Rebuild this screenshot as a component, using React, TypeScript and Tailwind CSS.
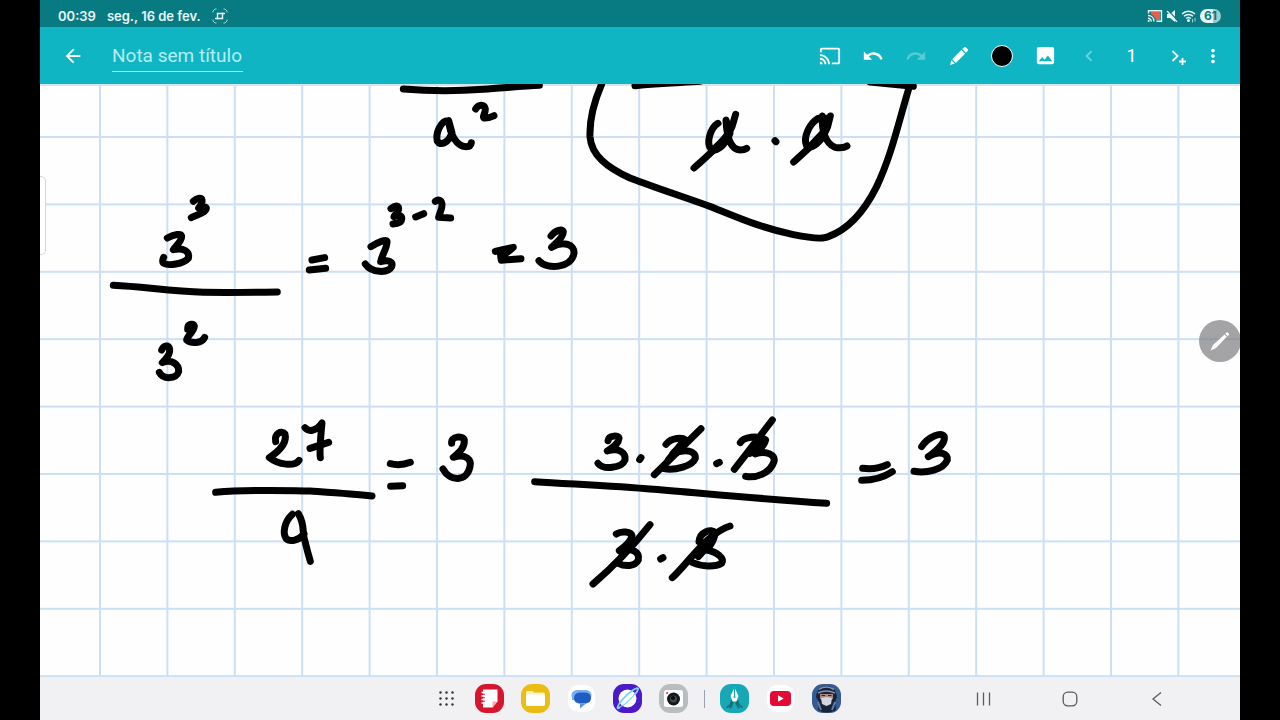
import type { ReactNode } from 'react';
import { MdArrowBack, MdCast, MdChevronLeft, MdImage, MdMoreVert, MdRedo, MdUndo } from 'react-icons/md';

// Each group holds the pen strokes of one part of the note, in triple-size units
const inkGroups = [
  {
    id: 'a-squared',
    transform: 'translate(390 80) scale(0.3333)',
    strokes: [
      'M40 27C120 34 200 34 280 28C340 24 400 18 448 16',
      'M174 122C152 122 136 160 142 184C150 198 176 190 186 158L176 122C180 165 200 198 228 200C238 200 243 195 244 188',
      'M257 87C265 72 284 72 286 86C287 100 276 110 282 114C294 116 305 110 312 107',
    ],
  },
  {
    id: 'a-times-a',
    transform: 'translate(580 80) scale(0.3333)',
    strokes: [
      'M65 12C40 70 28 120 30 170C34 225 80 262 150 294C230 325 310 350 400 383C480 415 540 442 640 464C700 476 730 478 745 470C800 450 850 400 890 320C935 225 955 130 988 20',
      'M165 17C240 10 300 8 360 4',
      'M870 6L1000 19',
      'M414 130C390 145 378 190 393 207C405 218 432 202 450 160L438 120C440 165 450 208 480 210C490 210 496 208 500 205',
      'M342 264C390 220 440 180 456 140L467 103',
      'M405 205L440 170',
      'M585 182L588 185',
      'M715 115C690 130 668 170 680 198C695 210 725 185 738 150L727 108C725 150 735 190 765 202C785 206 795 202 801 198',
      'M641 246C690 200 735 165 743 140L751 108',
      'M695 195L732 155L740 115',
    ],
  },
  {
    id: 'three-cubed',
    transform: 'translate(100 180) scale(0.3333)',
    strokes: [
      'M280 64C292 52 306 52 306 60C308 72 300 78 296 84C320 74 325 85 312 95C295 105 280 110 274 113',
      'M202 174C225 162 243 160 245 168C246 185 225 200 220 209C252 202 270 215 265 235C250 253 205 258 191 250C186 245 188 238 191 232',
      'M40 316C130 320 210 334 310 337C400 338 470 337 532 336',
      'M636 240L674 233',
      'M628 270L677 265',
      'M263 448C262 432 280 428 283 438C283 455 260 468 260 480C275 492 305 490 314 472',
      'M270 442L272 450',
      'M185 510C192 495 206 495 209 507C212 525 195 540 187 548C215 535 238 555 236 575C230 597 190 600 178 577',
    ],
  },
  {
    id: 'three-minus-two',
    transform: 'translate(340 180) scale(0.3333)',
    strokes: [
      'M153 86C165 75 178 75 176 88C174 98 164 104 162 110C184 102 188 110 184 122C178 132 165 131 159 132',
      'M227 111L251 101',
      'M286 64C295 56 306 60 306 76C306 90 298 100 296 112L332 114',
      'M93 200C115 185 138 178 141 184C143 202 125 225 122 245C145 238 160 245 155 260C145 280 95 280 76 252',
      'M466 214C490 208 505 205 520 202C510 212 495 222 482 228L484 241L543 236',
      'M480 219L508 209',
      'M633 168C645 152 665 145 670 155C670 175 645 190 635 202C670 180 705 195 702 220C695 265 620 270 597 242',
    ],
  },
  {
    id: 'twenty-seven-over-nine',
    transform: 'translate(200 400) scale(0.3333)',
    strokes: [
      'M227 125C222 100 245 90 255 102C262 130 235 155 208 173C235 195 285 200 297 181',
      'M315 83C325 96 348 95 366 69C362 110 358 150 361 173',
      'M330 145L386 127',
      'M47 277C150 268 250 272 330 273C400 278 460 282 516 288',
      'M571 191C590 196 610 195 631 187',
      'M572 259L608 257',
      'M755 130C752 108 790 106 793 120C795 145 775 160 760 172C800 160 815 180 810 200C800 247 750 245 729 207',
      'M277 343C252 365 248 400 258 415C270 428 298 420 312 402',
      'M295 341C316 375 306 400 314 420C320 445 324 460 331 484',
    ],
  },
  {
    id: 'cancelled-threes',
    transform: 'translate(520 400) scale(0.3333)',
    strokes: [
      'M264 122C266 105 298 105 297 115C295 135 275 142 262 153C300 142 318 160 315 180C305 205 250 210 234 190',
      'M359 179L363 173',
      'M438 133C455 112 487 112 497 120C490 138 465 152 458 162C495 145 528 152 526 175C518 198 465 212 432 206',
      'M403 224L543 86',
      'M485 130L445 180',
      'M590 191L598 187',
      'M661 128C670 110 715 105 737 120C732 140 718 150 705 162C740 150 768 165 762 185C750 222 705 235 677 229',
      'M643 208L700 135L757 60',
      'M715 125L690 160',
      'M44 245C170 253 290 258 400 268C570 282 740 298 920 310',
      'M289 402C305 392 333 395 336 407C333 425 315 440 298 452C335 442 360 455 355 480C345 500 315 500 295 490',
      'M219 552C280 500 330 450 390 374',
      'M325 430L305 470',
      'M422 477L429 473',
      'M537 425C540 395 575 385 585 398C585 420 570 438 560 450C590 455 615 475 605 490C585 502 545 500 518 488',
      'M457 533C500 495 560 400 630 378',
      'M575 425L535 470',
    ],
  },
  {
    id: 'final-three',
    transform: 'translate(840 410) scale(0.3333)',
    strokes: [
      'M68 175C95 178 120 175 142 164',
      'M65 211C100 211 130 203 157 185',
      'M245 110C265 80 303 65 313 80C316 105 285 125 265 140C300 120 325 130 322 150C310 180 260 190 222 184',
    ],
  },
];

function PencilIcon() {
  return (
    <svg viewBox="0 0 20 20" className="size-5" fill="currentColor" aria-hidden="true">
      <path d="M1 19l1.4-4.8 3.4 3.4zM3.2 13.2L12.3 4l3.7 3.7-9.1 9.2zM13.2 3.1l1.7-1.7c.6-.6 1.5-.6 2.1 0l1.6 1.6c.6.6.6 1.5 0 2.1l-1.7 1.7z" />
    </svg>
  );
}

function NextPageIcon() {
  return (
    <svg viewBox="0 0 18 20" className="h-5 w-[18px]" fill="none" stroke="currentColor" strokeWidth="1.8" aria-hidden="true">
      <path d="M3.500 5l5 5-5 5M13.500 12v7M10 15.500h7" />
    </svg>
  );
}

function ToolButton({ label, className = 'w-[43px]', children }: { label: string; className?: string; children: ReactNode }) {
  return (
    <button aria-label={label} className={`flex h-full shrink-0 items-center justify-center text-white ${className}`}>
      {children}
    </button>
  );
}

function StatusBar() {
  return (
    <div className="flex h-[27px] items-center justify-between bg-[#087b82] pt-1 pr-[19px] pl-[18px] text-[13px] leading-5 font-semibold text-[#e8f7f8]">
      <div className="flex items-center gap-[11px]">
        <span>00:39</span>
        <span>seg., 16 de fev.</span>
        <svg viewBox="0 0 16 16" className="size-4" fill="none" stroke="currentColor" aria-hidden="true">
          <path d="M1 4.500V3L3 1h1.500M11.500 1H13l2 2v1.500M15 11.500V13l-2 2h-1.500M4.500 15H3l-2-2v-1.500" opacity="0.7" />
          <path d="M5.500 11.500V5.500H13M3 10.500h7.500V4.500" strokeWidth="1.4" />
        </svg>
      </div>
      <div className="flex items-center gap-[3px]">
        <svg viewBox="0 0 16 14" className="h-[14px] w-4" aria-hidden="true">
          <path d="M4 3h9v8H9C8 8 6 6 4 5z" fill="#e8604c" />
          <path d="M1.500 4.500V1.800h13v10.400H9.500M1 6.500c3.500 0 6 2.500 6 6M1 9.200c1.800 0 3.300 1.500 3.300 3.300" fill="none" stroke="currentColor" strokeWidth="1.4" />
          <circle cx="1.7" cy="12" r="1" fill="currentColor" />
        </svg>
        <svg viewBox="0 0 12 12" className="size-3" fill="currentColor" aria-hidden="true">
          <path d="M1 4h3l5-4v12L4 8H1z" />
          <path d="M2 0l10 11" stroke="#087b82" strokeWidth="1.2" />
          <path d="M1 1l10 11" stroke="currentColor" strokeWidth="1.2" />
        </svg>
        <svg viewBox="0 0 16 14" className="h-[14px] w-4" fill="none" stroke="currentColor" strokeWidth="1.4" aria-hidden="true">
          <path d="M1 5c3.700-3.700 9.300-3.700 13 0M3 7.300c2.500-2.400 6.500-2.400 9 0M5.200 9.500c1.300-1.200 3.300-1.200 4.600 0" />
          <circle cx="7.5" cy="11.5" r="0.8" fill="currentColor" />
          <path d="M11.500 10v3.500M14 9v3.500" strokeWidth="1" opacity="0.7" />
        </svg>
        <span className="flex h-[14px] w-[21px] items-center justify-center rounded-full bg-linear-to-r from-[#e8f7f8] from-60% to-[#9ccdd0] to-60% text-xs font-bold text-[#087b82]">
          61
        </span>
      </div>
    </div>
  );
}

function Toolbar() {
  return (
    <header className="flex h-[57px] items-center bg-[#10b5c4] pr-4 pl-[11px]">
      <ToolButton label="Voltar">
        <MdArrowBack className="size-[22px]" />
      </ToolButton>
      <input
        aria-label="Título da nota"
        defaultValue="Nota sem título"
        className="ml-[18px] h-8 w-[131px] border-b border-[#b4eef2] bg-transparent pt-px font-['Roboto',sans-serif] text-[19px] leading-7 text-[#b4eef2] outline-none"
      />
      <div className="ml-auto flex h-full items-center">
        <ToolButton label="Transmitir">
          <MdCast className="size-[22px]" />
        </ToolButton>
        <ToolButton label="Desfazer">
          <MdUndo className="size-[22px]" />
        </ToolButton>
        <ToolButton label="Refazer">
          <MdRedo className="size-[22px] opacity-30" />
        </ToolButton>
        <ToolButton label="Caneta">
          <PencilIcon />
        </ToolButton>
        <ToolButton label="Cor">
          <span className="size-[22px] rounded-full border border-white bg-black" />
        </ToolButton>
        <ToolButton label="Imagem" className="w-11">
          <MdImage className="size-[23px]" />
        </ToolButton>
        <ToolButton label="Página anterior">
          <MdChevronLeft className="size-[22px] opacity-40" />
        </ToolButton>
        <span className="w-[43px] text-center font-['Roboto',sans-serif] text-lg text-white">1</span>
        <ToolButton label="Próxima página" className="w-[49px]">
          <NextPageIcon />
        </ToolButton>
        <ToolButton label="Mais opções" className="w-[22px]">
          <MdMoreVert className="size-[22px]" />
        </ToolButton>
      </div>
    </header>
  );
}

function NoteCanvas() {
  return (
    <main className="relative overflow-hidden bg-[#fefefe]">
      <svg viewBox="40 84 1200 593" className="block h-auto w-full" role="img" aria-label="Divisão de potências">
        <defs>
          <pattern id="grid" x="99" y="68.6" width="67.4" height="67.4" patternUnits="userSpaceOnUse">
            <path d="M1 0v67.400M0 1h67.400" stroke="#cbdff5" strokeWidth="2" />
          </pattern>
        </defs>
        <rect x="40" y="84" width="1200" height="593" fill="url(#grid)" />
        <path d="M40 85h1200" stroke="#d5e6ea" strokeWidth="2" />
        <g fill="none" stroke="#000" strokeWidth="21" strokeLinecap="round" strokeLinejoin="round">
          {inkGroups.map((group) => (
            <g key={group.id} transform={group.transform}>
              {group.strokes.map((d) => (
                <path key={d} d={d} />
              ))}
            </g>
          ))}
        </g>
      </svg>

      {/* Edge panel handle */}
      <div className="absolute top-[92px] -left-1 h-[79px] w-[10px] rounded-md border border-gray-300 bg-white" />

      {/* Floating pen */}
      <button
        aria-label="Ferramentas da caneta"
        className="absolute top-[236px] -right-px flex size-[42px] items-center justify-center rounded-full bg-[#7e7e82]/70 text-white"
      >
        <svg viewBox="0 0 20 20" className="size-5" fill="currentColor" aria-hidden="true">
          <path d="M.5 19.500l2.500-5.500L14.500 3.500l2.300 2.300L6 17zM15.300 2.700l1.200-1.200c.4-.4.8-.4 1.200 0l1.200 1.200c.4.4.4.8 0 1.200L17.600 5z" />
        </svg>
      </button>
    </main>
  );
}

function AppIcon({ label, children }: { label: string; children: ReactNode }) {
  return (
    <button aria-label={label} className="flex w-[46px] justify-center">
      <svg viewBox="0 0 29 29" className="size-[29px]">
        {children}
      </svg>
    </button>
  );
}

const dots = [1.5, 7.5, 13.5];

function Dock() {
  return (
    <footer className="grid h-[43px] grid-cols-[1fr_auto_1fr] items-center bg-[#f1f1f3]">
      <nav aria-label="Aplicativos" className="col-start-2 flex items-center pr-1">
        <button aria-label="Todos os aplicativos" className="flex w-10 justify-center">
          <svg viewBox="0 0 15 15" className="size-[15px]" fill="#333">
            {dots.map((y) => dots.map((x) => <circle key={`${x}-${y}`} cx={x} cy={y} r="1.2" />))}
          </svg>
        </button>
        <AppIcon label="Notas">
          <rect width="29" height="29" rx="11" fill="#d8152f" />
          <path d="M8 5.500h14.500v12l-5 6H8z" fill="#fff" />
          <path d="M22.500 17.500h-4q-1 0-1 1v5z" fill="#f5a5ae" />
          <path d="M6.500 8.500h3M6.500 12h3M6.500 15.500h3M6.500 19h3" stroke="#fff" strokeWidth="1.5" />
          <path d="M8 10.200h2M8 13.700h2M8 17.200h2" stroke="#d8152f" />
        </AppIcon>
        <AppIcon label="Meus arquivos">
          <rect width="29" height="29" rx="11" fill="#ebbd12" />
          <path d="M5 8.500q0-1.500 1.500-1.500h5l1.500 1.500h9.500q1.500 0 1.500 1.500v10H5z" fill="#fff0b5" />
          <rect x="5" y="10.5" width="19" height="11.5" rx="1.5" fill="#fff" />
        </AppIcon>
        <AppIcon label="Mensagens">
          <rect x="1" y="1" width="27" height="27" rx="10" fill="#fff" />
          <path d="M10 6h9a5.500 5.500 0 010 11h-9a5.500 5.500 0 010-11z" fill="#7aaaf0" />
          <path d="M5 8l5 8H5z" fill="#7aaaf0" />
          <path d="M12 8.500h7q5 1 5 5.500t-5 5.500H12q-5-1-5-5.500t5-5.500z" fill="#1f5cc4" />
          <path d="M11.500 19.500H19L13 24.500V20z" fill="#5b93e8" />
        </AppIcon>
        <AppIcon label="Internet">
          <rect width="29" height="29" rx="11" fill="#4c19c8" />
          <circle cx="14.5" cy="14.5" r="9" fill="#fff" />
          <path d="M7 23C3 27 4 21 10 15C16 8 25 2 25 5C25 6 24 8 22 10" fill="none" stroke="#79d4f4" strokeWidth="1.8" />
          <path d="M7 23C12 21 19 14 22.500 9" fill="none" stroke="#79d4f4" strokeWidth="1.2" />
        </AppIcon>
        <AppIcon label="Câmera">
          <rect width="29" height="29" rx="11" fill="#b9bdbf" />
          <rect x="5" y="6" width="19" height="17" rx="2.5" fill="#fff" />
          <circle cx="14.5" cy="15" r="6.5" fill="#15181b" />
          <circle cx="14.5" cy="15" r="3.5" fill="#42484d" />
          <circle cx="14" cy="14" r="2" fill="#090b0d" />
          <circle cx="8" cy="9" r="1" fill="#df3040" />
        </AppIcon>
        <span className="flex w-[15px] justify-center">
          <span className="h-[18px] w-px bg-gray-400" />
        </span>
        <AppIcon label="Caderno">
          <rect width="29" height="29" rx="11" fill="#17a8b5" />
          <path d="M11.500 16Q12 21 6.500 23.500M17.500 16Q18 21 22.500 23.500M13 17Q12 23 9.500 24M16 17Q17 23 19.500 24" fill="none" stroke="#146f7a" strokeWidth="1.6" />
          <path d="M14.500 3.500l4 8.500-2 5.500h-4l-2-5.500z" fill="#fff" />
          <path d="M14.500 4v9" stroke="#17a8b5" />
          <circle cx="14.5" cy="13" r="1" fill="#17a8b5" />
        </AppIcon>
        <AppIcon label="YouTube">
          <rect x="1" y="1" width="27" height="27" rx="10" fill="#fff" />
          <rect x="4" y="7" width="21" height="15" rx="4" fill="#e50935" />
          <path d="M12 11.200v6.600l5.700-3.300z" fill="#fff" />
        </AppIcon>
        <AppIcon label="Jogo">
          <rect width="29" height="29" rx="11" fill="#355b91" />
          <path d="M4 13Q5 3 14 2q10 0 11 11l-2 5 1 8q-9 5-18 0l1-8z" fill="#192338" />
          <path d="M7 5.500q7-5 15 0M6 9q8-4 17 0" fill="none" stroke="#8093b0" strokeWidth="1.5" />
          <path d="M8 10h13v5q-6 2-13 0z" fill="#a98783" />
          <path d="M9.500 11.500h3.500M16 11.500h3.500" stroke="#2a2530" />
          <path d="M9 14l5.500-1 5.500 1-1 6-4.500 2-4.500-2z" fill="#d2d7de" />
          <path d="M6 18l3 8M23 18l-3 8" stroke="#5c80b8" strokeWidth="2" />
        </AppIcon>
      </nav>
      <nav aria-label="Sistema" className="flex items-center justify-end pr-10 text-[#5b5b5f]">
        <button aria-label="Recentes" className="flex w-[87px] justify-center">
          <svg viewBox="0 0 16 16" className="size-4" fill="none" stroke="currentColor" strokeWidth="1.3">
            <path d="M2.500 1.500v13M8.500 1.500v13M14.500 1.500v13" />
          </svg>
        </button>
        <button aria-label="Início" className="flex w-[87px] justify-center">
          <svg viewBox="0 0 16 16" className="size-4" fill="none" stroke="currentColor" strokeWidth="1.3">
            <rect x="1.2" y="1.2" width="13.6" height="13.6" rx="4.5" />
          </svg>
        </button>
        <button aria-label="Voltar ao anterior" className="flex w-[87px] justify-center">
          <svg viewBox="0 0 16 16" className="size-4" fill="none" stroke="currentColor" strokeWidth="1.3">
            <path d="M12 1.500L4 8l8 6.500" />
          </svg>
        </button>
      </nav>
    </footer>
  );
}

export default function App() {
  return (
    <div className="min-h-screen bg-black px-10 font-['Inter',sans-serif]">
      <StatusBar />
      <Toolbar />
      <NoteCanvas />
      <Dock />
    </div>
  );
}
